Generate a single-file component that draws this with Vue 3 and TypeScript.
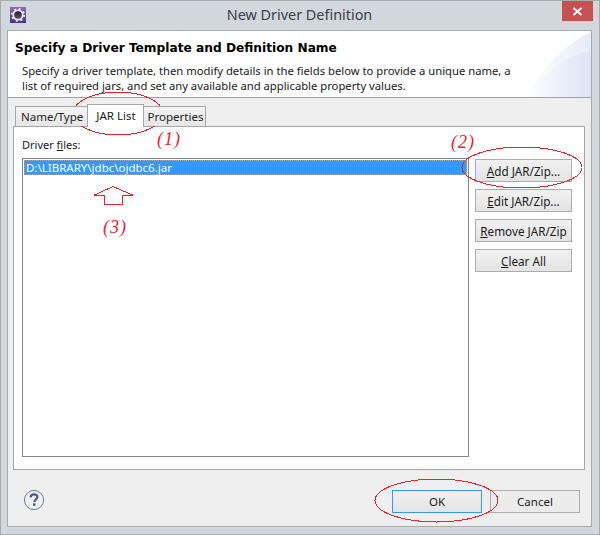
<script setup lang="ts">
const sideButtons = [
  { key: 'A', rest: 'dd JAR/Zip...' },
  { key: 'E', rest: 'dit JAR/Zip...' },
  { key: 'R', rest: 'emove JAR/Zip' },
  { key: 'C', rest: 'lear All' },
]
</script>

<template>
  <div class="window">
    <div class="titlebar">
      <svg class="app-icon" width="16" height="16" viewBox="0 0 16 16">
        <defs>
          <linearGradient id="ic" x1="0" y1="0" x2="0" y2="1">
            <stop offset="0" stop-color="#8a6bb5" />
            <stop offset="1" stop-color="#4a2f86" />
          </linearGradient>
          <linearGradient id="hole" x1="0" y1="0" x2="0" y2="1">
            <stop offset="0" stop-color="#241f2e" />
            <stop offset="1" stop-color="#5b5370" />
          </linearGradient>
        </defs>
        <rect width="16" height="16" fill="url(#ic)" />
        <circle cx="8" cy="8" r="4.6" fill="none" stroke="#eeeef0" stroke-width="2" />
        <circle cx="8" cy="8" r="6.2" fill="none" stroke="#eeeef0" stroke-width="1.6" stroke-dasharray="2 2.87" />
        <circle cx="8" cy="8" r="3.7" fill="url(#hole)" />
      </svg>
      <div class="title">New Driver Definition</div>
      <div class="close">
        <svg width="11" height="9" viewBox="0 0 11 9">
          <path d="M1.500 1 9.500 8M9.500 1 1.500 8" stroke="#fff" stroke-width="2" />
        </svg>
      </div>
    </div>
    <div class="client">
      <header class="banner">
        <svg class="swoosh" width="80" height="66" viewBox="0 0 80 66">
          <defs>
            <linearGradient id="sw1" x1="0" y1="0" x2="1" y2="0">
              <stop offset="0" stop-color="#ffffff" />
              <stop offset="1" stop-color="#e6ebf9" />
            </linearGradient>
            <linearGradient id="sw2" x1="0" y1="0" x2="1" y2="0">
              <stop offset="0" stop-color="#ffffff" />
              <stop offset="1" stop-color="#dde4f6" />
            </linearGradient>
          </defs>
          <path d="M14 66C30 40 54 12 80 1V66Z" fill="url(#sw1)" />
          <path d="M13 66C30 46 52 24 80 20V66Z" fill="url(#sw2)" />
        </svg>
        <h1 class="heading">Specify a Driver Template and Definition Name</h1>
        <p class="desc">Specify a driver template, then modify details in the fields below to provide a unique name, a<br />list of required jars, and set any available and applicable property values.</p>
      </header>
      <div class="body">
        <div class="tabs">
          <div class="tab first">Name/Type</div>
          <div class="tab active">JAR List</div>
          <div class="tab last">Properties</div>
        </div>
        <div class="panel">
          <div class="list-col">
            <div class="label">Driver <u>f</u>iles:</div>
            <div class="list">
              <div class="row">D:\LIBRARY\jdbc\ojdbc6.jar</div>
            </div>
          </div>
          <div class="side">
            <button v-for="b in sideButtons" :key="b.key" class="btn side-btn" type="button"><u>{{ b.key }}</u>{{ b.rest }}</button>
          </div>
        </div>
        <footer class="footer">
          <svg class="help" width="22" height="22" viewBox="0 0 22 22">
            <circle cx="11" cy="11" r="9.6" fill="none" stroke="#6c7d9d" stroke-width="1" />
            <path d="M7.600 8.400C7.700 6.300 9.200 5.400 11 5.400C13 5.400 14.400 6.500 14.400 8.200C14.400 10.400 11.300 10.500 11.300 13" fill="none" stroke="#4a5f86" stroke-width="2.200" />
            <rect x="10" y="14.300" width="2.500" height="2.500" fill="#4a5f86" />
          </svg>
          <div class="actions">
            <button class="btn action default" type="button">OK</button>
            <button class="btn action" type="button">Cancel</button>
          </div>
        </footer>
      </div>
    </div>
    <svg class="marks" width="600" height="535" viewBox="0 0 600 535">
      <g fill="none" stroke="#e8222e" stroke-width="1" shape-rendering="crispEdges">
        <ellipse cx="118" cy="113.500" rx="45" ry="21.500" />
        <ellipse cx="522" cy="167.500" rx="60" ry="20.500" />
        <ellipse cx="436.500" cy="500.500" rx="61.500" ry="21.500" />
        <path d="M94.500 195 113 186.500 132.500 195H122.500V204.500H104V195Z" />
      </g>
    </svg>
    <span class="note n1">(1)</span>
    <span class="note n2">(2)</span>
    <span class="note n3">(3)</span>
  </div>
</template>

<style>
html, body { margin: 0; padding: 0; background: #fff; }
</style>

<style scoped>
.window {
  position: relative;
  box-sizing: border-box;
  width: 600px;
  height: 535px;
  border: 1px solid #a6abaf;
  background: #d2d7dc;
  font-family: "Noto Sans", "Open Sans", sans-serif;
  font-size: 11.5px;
  color: #1a1a1a;
  display: flex;
  flex-direction: column;
  padding: 0 7px 7px 6px;
  overflow: hidden;
}
.titlebar {
  height: 29px;
  flex: none;
  display: flex;
  align-items: flex-start;
  position: relative;
}
.app-icon { margin: 6px 0 0 3px; flex: none; }
.title {
  position: absolute;
  left: 0;
  right: 0;
  top: 4px;
  text-align: center;
  font-size: 14.4px;
  line-height: 20px;
  color: #3a4148;
}
.close {
  position: absolute;
  right: -1px;
  top: 0;
  width: 31px;
  height: 20px;
  background: #c75050;
  display: flex;
  align-items: center;
  justify-content: center;
}
.client {
  flex: 1;
  min-height: 0;
  border: 1px solid #a6abaf;
  background: #efefef;
  display: flex;
  flex-direction: column;
}
.banner {
  position: relative;
  height: 67px;
  box-sizing: border-box;
  flex: none;
  background: #fff;
  border-bottom: 1px solid #a0a0a0;
  overflow: hidden;
}
.swoosh { position: absolute; right: 0; top: 0; }
.heading {
  position: relative;
  margin: 8px 0 0 7px;
  font-family: "DejaVu Sans", sans-serif;
  font-size: 12.2px;
  line-height: 18px;
  font-weight: 700;
  color: #000;
}
.desc {
  position: relative;
  margin: 6px 0 0 14px;
  font-size: 11.25px;
  line-height: 15px;
  color: #1a1a1a;
}
.body {
  flex: 1;
  min-height: 0;
  padding: 6px 6px 0 5px;
  display: flex;
  flex-direction: column;
}
.tabs {
  display: flex;
  align-items: flex-end;
  height: 22px;
  flex: none;
  padding-left: 2px;
  position: relative;
  z-index: 1;
}
.tab {
  box-sizing: border-box;
  height: 20px;
  margin-right: -1px;
  border: 1px solid #a6a6a6;
  border-bottom: none;
  background: linear-gradient(#f3f3f3, #e6e6e6);
  line-height: 20px;
  color: #222;
}
.tab.first { padding: 0 4px 0 5px; }
.tab.last { padding: 0 2px 0 4px; }
.tab.active {
  height: 23px;
  background: #fff;
  margin-bottom: -1px;
  padding: 0 7px 0 8px;
  line-height: 21px;
}
.panel {
  flex: none;
  box-sizing: border-box;
  height: 344px;
  background: #fff;
  border: 1px solid #a6a6a6;
  display: flex;
  padding: 10px 0 12px 8px;
}
.list-col {
  width: 447px;
  flex: none;
  display: flex;
  flex-direction: column;
}
.label { font-size: 11px; line-height: 15px; height: 21px; }
.list {
  flex: 1;
  border: 1px solid #828790;
  padding: 1px;
  box-sizing: border-box;
}
.row {
  height: 15px;
  line-height: 15px;
  background: #3399ff;
  color: #fff;
  padding-left: 2px;
  outline: 1px dotted #cf9f66;
  outline-offset: -1px;
}
.side {
  margin-left: 6px;
  display: flex;
  flex-direction: column;
  gap: 7px;
  padding-top: 22px;
}
.btn {
  box-sizing: border-box;
  font: inherit;
  color: #1a1a1a;
  background: linear-gradient(#f1f1f1, #e4e4e4);
  border: 1px solid #acacac;
  padding: 0;
  text-align: center;
}
.side-btn {
  width: 97px;
  height: 23px;
  line-height: 20px;
  font-size: 11.7px;
}
.footer {
  flex: 1;
  display: flex;
  align-items: flex-start;
  justify-content: space-between;
}
.help { margin: 19px 0 0 10px; }
.actions {
  display: flex;
  gap: 8px;
  margin: 20px 5px 0 0;
}
.action {
  width: 90px;
  height: 23px;
  background: #ececec;
}
.action.default {
  border-color: #3399ff;
  background: linear-gradient(#f1f1f1, #e4e4e4);
}
.marks {
  position: absolute;
  left: -1px;
  top: -1px;
  pointer-events: none;
}
.note {
  position: absolute;
  font-family: "Liberation Serif", serif;
  font-style: italic;
  font-size: 18px;
  line-height: 20px;
  color: #e8222e;
  letter-spacing: 1px;
}
.n1 { left: 156px; top: 128px; }
.n2 { left: 450px; top: 131px; }
.n3 { left: 102px; top: 216px; }
</style>
